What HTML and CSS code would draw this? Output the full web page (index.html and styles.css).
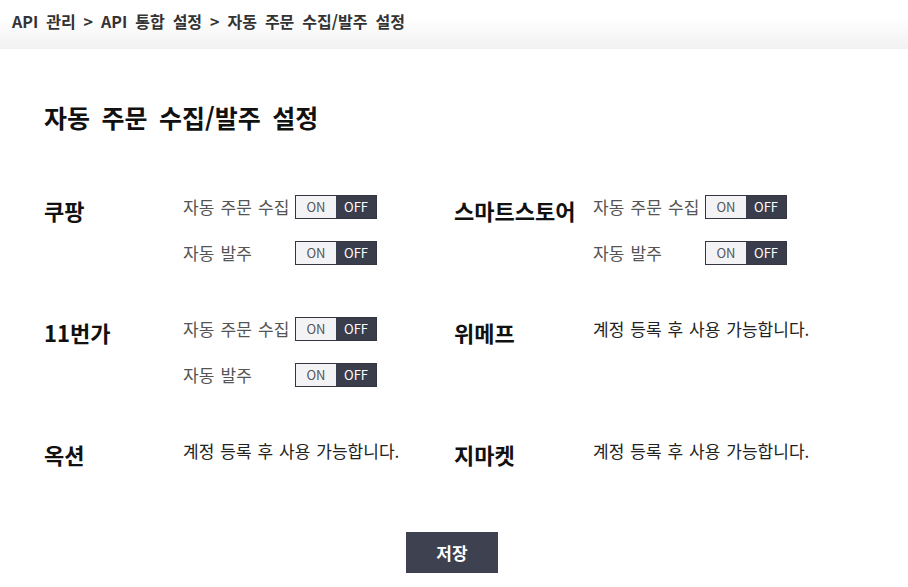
FILE: index.html
```html
<!DOCTYPE html>
<html lang="ko">
<head>
<meta charset="utf-8">
<title>자동 주문 수집/발주 설정</title>
<link rel="stylesheet" href="styles.css">
</head>
<body>
<header class="crumbs">API 관리 &gt; API 통합 설정 &gt; 자동 주문 수집/발주 설정</header>
<main class="page">
  <h1 class="title">자동 주문 수집/발주 설정</h1>
  <div class="grid">
    <section class="shop">
      <h2 class="shop-name">쿠팡</h2>
      <div class="opts">
        <div class="opt"><span class="label">자동 주문 수집</span><span class="toggle"><span class="on">ON</span><span class="off">OFF</span></span></div>
        <div class="opt"><span class="label">자동 발주</span><span class="toggle"><span class="on">ON</span><span class="off">OFF</span></span></div>
      </div>
    </section>
    <section class="shop">
      <h2 class="shop-name">스마트스토어</h2>
      <div class="opts">
        <div class="opt"><span class="label">자동 주문 수집</span><span class="toggle"><span class="on">ON</span><span class="off">OFF</span></span></div>
        <div class="opt"><span class="label">자동 발주</span><span class="toggle"><span class="on">ON</span><span class="off">OFF</span></span></div>
      </div>
    </section>
    <section class="shop">
      <h2 class="shop-name">11번가</h2>
      <div class="opts">
        <div class="opt"><span class="label">자동 주문 수집</span><span class="toggle"><span class="on">ON</span><span class="off">OFF</span></span></div>
        <div class="opt"><span class="label">자동 발주</span><span class="toggle"><span class="on">ON</span><span class="off">OFF</span></span></div>
      </div>
    </section>
    <section class="shop">
      <h2 class="shop-name">위메프</h2>
      <div class="opts"><p class="notice">계정 등록 후 사용 가능합니다.</p></div>
    </section>
    <section class="shop">
      <h2 class="shop-name">옥션</h2>
      <div class="opts"><p class="notice">계정 등록 후 사용 가능합니다.</p></div>
    </section>
    <section class="shop">
      <h2 class="shop-name">지마켓</h2>
      <div class="opts"><p class="notice">계정 등록 후 사용 가능합니다.</p></div>
    </section>
  </div>
  <div class="actions"><button class="save" type="button">저장</button></div>
</main>
</body>
</html>
```
FILE: styles.css
```css
* { box-sizing: border-box; }
html, body { margin: 0; padding: 0; background: #fff; }
body {
  font-family: "Noto Sans CJK KR", "Noto Sans", sans-serif;
  color: #222;
}
.crumbs {
  height: 49px;
  padding: 8px 0 0 12px;
  font-size: 16px;
  font-weight: bold;
  color: #333;
  word-spacing: 3.5px;
  line-height: 26px;
  background: linear-gradient(to bottom, #ffffff 0%, #ffffff 35%, #f1f1f1 100%);
}
.page { padding: 0 48px 0 44px; }
.title {
  margin: 50px 0 0;
  font-size: 25px;
  line-height: 36px;
  font-weight: bold;
  color: #111;
  word-spacing: 4.5px;
}
.grid {
  margin-top: 60px;
  display: grid;
  grid-template-columns: 410px 1fr;
  row-gap: 52px;
}
.shop { display: flex; align-items: flex-start; }
.shop-name {
  margin: 0;
  width: 139px;
  padding-top: 1px;
  font-size: 22px;
  line-height: 28px;
  font-weight: bold;
  color: #111;
}
.opts { display: flex; flex-direction: column; gap: 22px; }
.opt { display: flex; align-items: center; height: 24px; }
.label {
  width: 112px;
  font-size: 17px;
  color: #555;
  line-height: 24px;
  word-spacing: 1.5px;
}
.toggle {
  display: flex;
  width: 82px;
  height: 24px;
  border: 1px solid #33363f;
  font-size: 13px;
  line-height: 22px;
}
.toggle span { flex: 1; text-align: center; }
.on { background: #f3f3f6; color: #555; }
.off { background: #3a3d4b; color: #fff; }
.notice {
  margin: 0;
  font-size: 17px;
  line-height: 24px;
  color: #222;
  word-spacing: 1.2px;
}
.actions { display: flex; justify-content: center; margin-top: 64px; }
.save {
  width: 92px;
  height: 41px;
  border: none;
  background: #3d4150;
  color: #fff;
  font-family: inherit;
  font-size: 17px;
  font-weight: bold;
  cursor: pointer;
}
```
